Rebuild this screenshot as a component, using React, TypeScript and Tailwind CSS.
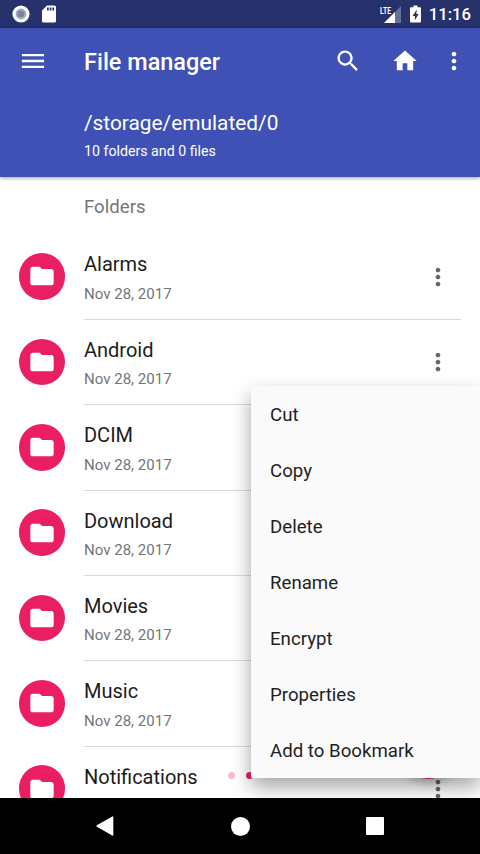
import type { ReactNode } from "react";

interface Folder {
  name: string;
  date?: string;
}

const folders: Folder[] = [
  { name: "Alarms", date: "Nov 28, 2017" },
  { name: "Android", date: "Nov 28, 2017" },
  { name: "DCIM", date: "Nov 28, 2017" },
  { name: "Download", date: "Nov 28, 2017" },
  { name: "Movies", date: "Nov 28, 2017" },
  { name: "Music", date: "Nov 28, 2017" },
  { name: "Notifications" },
];

const menuItems = ["Cut", "Copy", "Delete", "Rename", "Encrypt", "Properties", "Add to Bookmark"];

function Icon({ className, children }: { className?: string; children: ReactNode }) {
  return (
    <svg viewBox="0 0 24 24" fill="currentColor" className={`block shrink-0 ${className ?? "size-7"}`}>
      {children}
    </svg>
  );
}

function MoreIcon({ className }: { className?: string }) {
  return (
    <Icon className={className}>
      <path d="M12 8c1.100 0 2-.9 2-2s-.9-2-2-2-2 .9-2 2 .9 2 2 2zm0 2c-1.100 0-2 .9-2 2s.9 2 2 2 2-.9 2-2-.9-2-2-2zm0 6c-1.100 0-2 .9-2 2s.9 2 2 2 2-.9 2-2-.9-2-2-2z" />
    </Icon>
  );
}

function StatusBar() {
  return (
    <div className="flex h-7 shrink-0 items-center bg-[#27316b] pr-[9px] pl-3 text-white">
      <svg viewBox="0 0 18 18" className="size-[18px]">
        <circle cx="9" cy="9" r="8.600" fill="#fff" />
        <circle cx="9" cy="9" r="5.400" fill="#a3a7bf" />
        <circle cx="9" cy="9" r="3.300" fill="#7d82a5" />
      </svg>
      <svg viewBox="0 0 14 18" className="ml-3 h-[18px] w-[14px]">
        <path d="M5 .5h7.500Q14 .5 14 2v14q0 1.500-1.500 1.500h-11Q0 17.500 0 16V5.500z" fill="#fff" />
        <path d="M5 2.500h1.700v3H5zM7.700 2.500h1.700v3H7.700zM10.400 2.500h1.700v3h-1.700z" fill="#27316b" />
      </svg>
      <div className="ml-auto flex items-center">
        <svg viewBox="0 0 22 18" className="h-[18px] w-[22px]">
          <path d="M21 1v17H4z" fill="#fff" fillOpacity="0.3" />
          <path d="M15 7v11H4z" fill="#fff" />
          <rect x="0" y="0" width="11.500" height="9" fill="#27316b" />
          <text x="0" y="8.500" textLength="11" lengthAdjust="spacingAndGlyphs" fontSize="9.500" fontWeight="700" fill="#fff">
            LTE
          </text>
        </svg>
        <svg viewBox="0 0 11 18" className="ml-[8px] h-[18px] w-[11px]">
          <path d="M3.500.5h4v1.700H10q1 0 1 1v13.300q0 1-1 1H1q-1 0-1-1V3.200q0-1 1-1h2.500z" fill="#fff" />
          <path d="M6.800 4.500 2.600 11h2.300v4.300L8.600 9H6.300z" fill="#27316b" />
        </svg>
        <span className="ml-[8px] pt-[2px] text-[16.700px] leading-5 font-medium">11:16</span>
      </div>
    </div>
  );
}

function Header() {
  return (
    <header className="relative h-[149px] shrink-0 bg-[#3f51b5] text-white shadow-[0_1px_4px_rgba(0,0,0,0.4)]">
      <div className="flex h-[65px] items-center pl-[19px]">
        <Icon>
          <path d="M2.500 18h19v-2h-19v2zm0-5h19v-2h-19v2zm0-7v2h19V6h-19z" />
        </Icon>
        <h1 className="ml-[37px] pt-[2px] text-[23.450px] leading-7 font-medium">File manager</h1>
        <div className="ml-auto flex items-center pr-3">
          <Icon>
            <path d="M15.500 14h-.79l-.28-.27C15.410 12.590 16 11.110 16 9.500 16 5.910 13.090 3 9.500 3S3 5.910 3 9.500 5.910 16 9.500 16c1.610 0 3.090-.59 4.230-1.570l.27.28v.79l5 4.990L20.490 19l-4.990-5zm-6 0C7.010 14 5 11.990 5 9.500S7.010 5 9.500 5 14 7.010 14 9.500 11.990 14 9.500 14z" />
          </Icon>
          <Icon className="ml-[29px] size-7">
            <path d="M10 20v-6h4v6h5v-8h3L12 3 2 12h3v8z" />
          </Icon>
          <MoreIcon className="ml-[21px] size-7" />
        </div>
      </div>
      <p className="mt-[18px] pl-21 text-[20.850px] leading-6">/storage/emulated/0</p>
      <p className="mt-[8px] pl-21 text-[14.200px] leading-4">10 folders and 0 files</p>
    </header>
  );
}

function FolderRow({ folder }: { folder: Folder }) {
  return (
    <li className="flex h-[85.360px] shrink-0 pl-[18.800px]">
      <div className="mt-[18.500px] flex size-[46.600px] shrink-0 items-center justify-center rounded-full bg-[#e91e63] text-white">
        <Icon>
          <path d="M10 4H4c-1.100 0-1.990.9-1.990 2L2 18c0 1.100.9 2 2 2h16c1.100 0 2-.9 2-2V8c0-1.100-.9-2-2-2h-8l-2-2z" />
        </Icon>
      </div>
      <div className="mr-[19px] ml-[18.600px] flex flex-1 items-start border-b border-[#dadada]">
        <div className="flex-1 pt-[17.800px]">
          <div className="text-[20px] leading-6 text-[#1c1c1c]">{folder.name}</div>
          {folder.date && <div className="mt-[7.500px] text-[15.050px] leading-5 text-[#757575]">{folder.date}</div>}
        </div>
        <MoreIcon className="mt-[28px] mr-[9px] size-7 text-[#666]" />
      </div>
    </li>
  );
}

function ContextMenu() {
  return (
    <ul className="absolute top-[386px] right-0 w-[229px] rounded-l-[2px] bg-[#fafafa] shadow-[0_9px_20px_rgba(0,0,0,0.36)]">
      {menuItems.map((item) => (
        <li key={item} className="flex h-14 items-center pt-[2px] pl-[19px] text-[18.670px] text-[#1f1f1f]">
          {item}
        </li>
      ))}
    </ul>
  );
}

function NavBar() {
  return (
    <nav className="relative flex h-14 shrink-0 items-center bg-black px-[90px] text-white">
      <svg viewBox="0 0 30 30" className="size-[30px]" fill="currentColor">
        <path d="M22.300 5.500Q23.300 5 23.300 6.200v17.600q0 1.200-1 .7L6.800 15.700q-.9-.7 0-1.400z" />
      </svg>
      <div className="mx-auto size-[19px] rounded-full bg-white" />
      <div className="mr-[6px] ml-[6px] size-[18px] rounded-[1px] bg-white" />
    </nav>
  );
}

export default function App() {
  return (
    <div className="relative flex h-[854px] w-[480px] flex-col overflow-hidden bg-white font-['Roboto',sans-serif]">
      <StatusBar />
      <Header />
      <main className="flex min-h-0 flex-1 flex-col overflow-hidden">
        <h2 className="h-[57.700px] shrink-0 pt-[18px] pl-21 text-[18.670px] leading-6 text-[#757575]">Folders</h2>
        <ul className="flex flex-col">
          {folders.map((folder) => (
            <FolderRow key={folder.name} folder={folder} />
          ))}
        </ul>
      </main>

      {/* page indicator and floating button, both partly under the menu */}
      <div className="absolute top-[772px] left-[227.500px] flex gap-[11px]">
        <span className="size-[7px] rounded-full bg-[#f8bbd0]" />
        <span className="size-[7px] rounded-full bg-[#e91e63]" />
      </div>
      <div className="absolute top-[714px] left-[396px] size-[65px] rounded-full bg-[#e91e63] shadow-[0_4px_8px_rgba(0,0,0,0.2)]" />

      <ContextMenu />
      <NavBar />
    </div>
  );
}
